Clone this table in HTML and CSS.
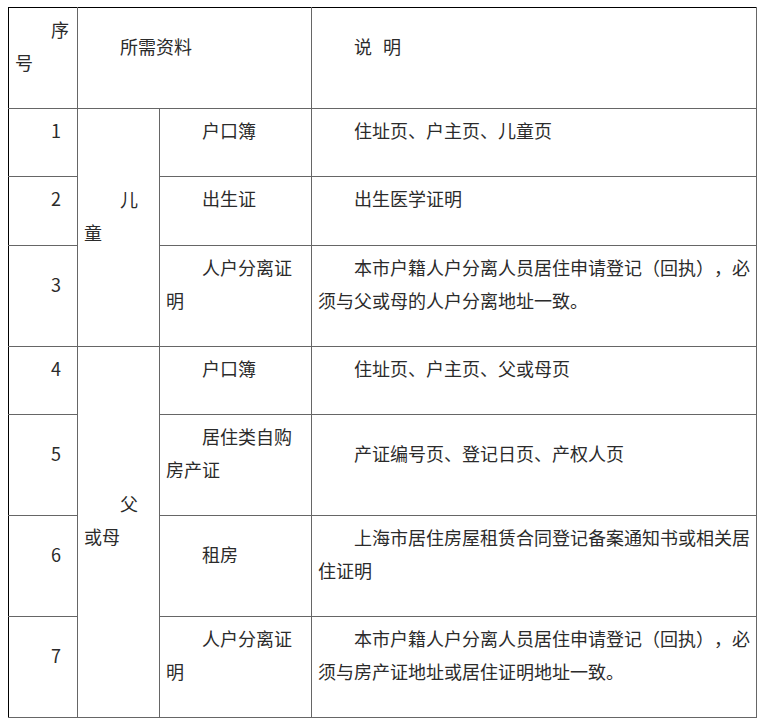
FILE: index.html
```html
<!DOCTYPE html>
<html lang="zh-CN">
<head>
<meta charset="utf-8">
<title>所需资料</title>
<link rel="stylesheet" href="styles.css">
</head>
<body>
<table class="docs">
  <colgroup>
    <col class="c1"><col class="c2"><col class="c3"><col class="c4">
  </colgroup>
  <tr class="head">
    <td><p>序号</p></td>
    <td colspan="2"><p>所需资料</p></td>
    <td><p>说<span class="gap"></span>明</p></td>
  </tr>
  <tr>
    <td><p>1</p></td>
    <td rowspan="3"><p>儿童</p></td>
    <td><p>户口簿</p></td>
    <td><p>住址页、户主页、儿童页</p></td>
  </tr>
  <tr class="tall">
    <td><p>2</p></td>
    <td><p>出生证</p></td>
    <td><p>出生医学证明</p></td>
  </tr>
  <tr>
    <td><p>3</p></td>
    <td><p>人户分离证明</p></td>
    <td><p>本市户籍人户分离人员居住申请登记（回执），必须与父或母的人户分离地址一致。</p></td>
  </tr>
  <tr>
    <td><p>4</p></td>
    <td rowspan="4"><p>父或母</p></td>
    <td><p>户口簿</p></td>
    <td><p>住址页、户主页、父或母页</p></td>
  </tr>
  <tr>
    <td><p>5</p></td>
    <td><p>居住类自购房产证</p></td>
    <td><p>产证编号页、登记日页、产权人页</p></td>
  </tr>
  <tr>
    <td><p>6</p></td>
    <td><p>租房</p></td>
    <td><p>上海市居住房屋租赁合同登记备案通知书或相关居住证明</p></td>
  </tr>
  <tr>
    <td><p>7</p></td>
    <td><p>人户分离证明</p></td>
    <td><p>本市户籍人户分离人员居住申请登记（回执），必须与房产证地址或居住证明地址一致。</p></td>
  </tr>
</table>
</body>
</html>
```

FILE: styles.css
```css
html, body {
  background: #ffffff;
}
body {
  margin: 7px 0 0 8px;
  font-family: "Noto Sans CJK SC", "Noto Sans", sans-serif;
  font-size: 18px;
  color: #2b2b2b;
}
.docs {
  border-collapse: collapse;
  table-layout: fixed;
  width: 748px;
  border-top: 1px solid #000000;
  border-left: 1px solid #000000;
}
.c1 { width: 69px; }
.c2 { width: 82px; }
.c3 { width: 152px; }
.c4 { width: 445px; }
.docs td {
  border: 1px solid #666666;
  padding: 5px 5px 5px 6px;
  vertical-align: middle;
  word-break: break-all;
}
.docs .tall td {
  padding-bottom: 6px;
}
.docs tr:first-child td {
  border-top-color: #000000;
}
.docs td:first-child {
  border-left-color: #000000;
}
.docs p {
  margin: 0 0 24px 0;
  line-height: 33px;
  text-indent: 2em;
  text-spacing-trim: space-all;
}
.gap {
  display: inline-block;
  width: 11px;
}
```
